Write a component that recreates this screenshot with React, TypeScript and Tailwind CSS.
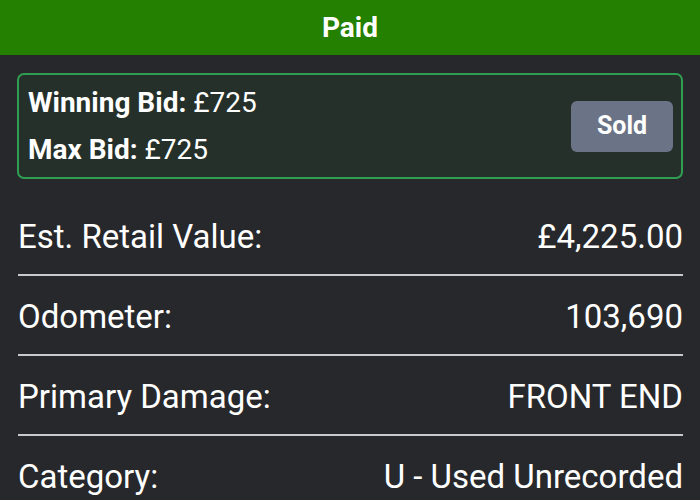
const rows = [
  { label: 'Est. Retail Value:', value: '£4,225.00' },
  { label: 'Odometer:', value: '103,690' },
  { label: 'Primary Damage:', value: 'FRONT END' },
  { label: 'Category:', value: 'U - Used Unrecorded' },
];

export default function App() {
  return (
    <div
      className="w-[700px] h-[500px] overflow-hidden bg-[#27282b] text-white"
      style={{ fontFamily: 'Roboto, "Liberation Sans", sans-serif' }}
    >
      {/* Status banner */}
      <div className="h-[55px] bg-[#238000] flex items-center justify-center">
        <span className="text-[28px] font-bold leading-none">Paid</span>
      </div>

      <div className="px-[17px] pt-[18px]">
        {/* Bid summary */}
        <div className="flex items-center justify-between rounded-[7px] border-2 border-[#2f9d52] bg-[#243029] pl-[9px] pr-[8px] h-[106px]">
          <div className="flex flex-col gap-[14px] text-[28px] leading-[33px]">
            <div>
              <span className="font-bold">Winning Bid:</span> £725
            </div>
            <div>
              <span className="font-bold">Max Bid:</span> £725
            </div>
          </div>
          <button className="w-[102px] h-[51px] rounded-[6px] bg-[#6b7386] text-[25px] font-bold">
            Sold
          </button>
        </div>

        {/* Details */}
        <div className="mt-[17px] pl-px">
          {rows.map((r) => (
            <div
              key={r.label}
              className="flex justify-between pt-[22px] pb-[18px] border-b-2 border-[#c9c9c9] text-[33px] leading-[38px]"
            >
              <span>{r.label}</span>
              <span>{r.value}</span>
            </div>
          ))}
        </div>
      </div>
    </div>
  );
}
